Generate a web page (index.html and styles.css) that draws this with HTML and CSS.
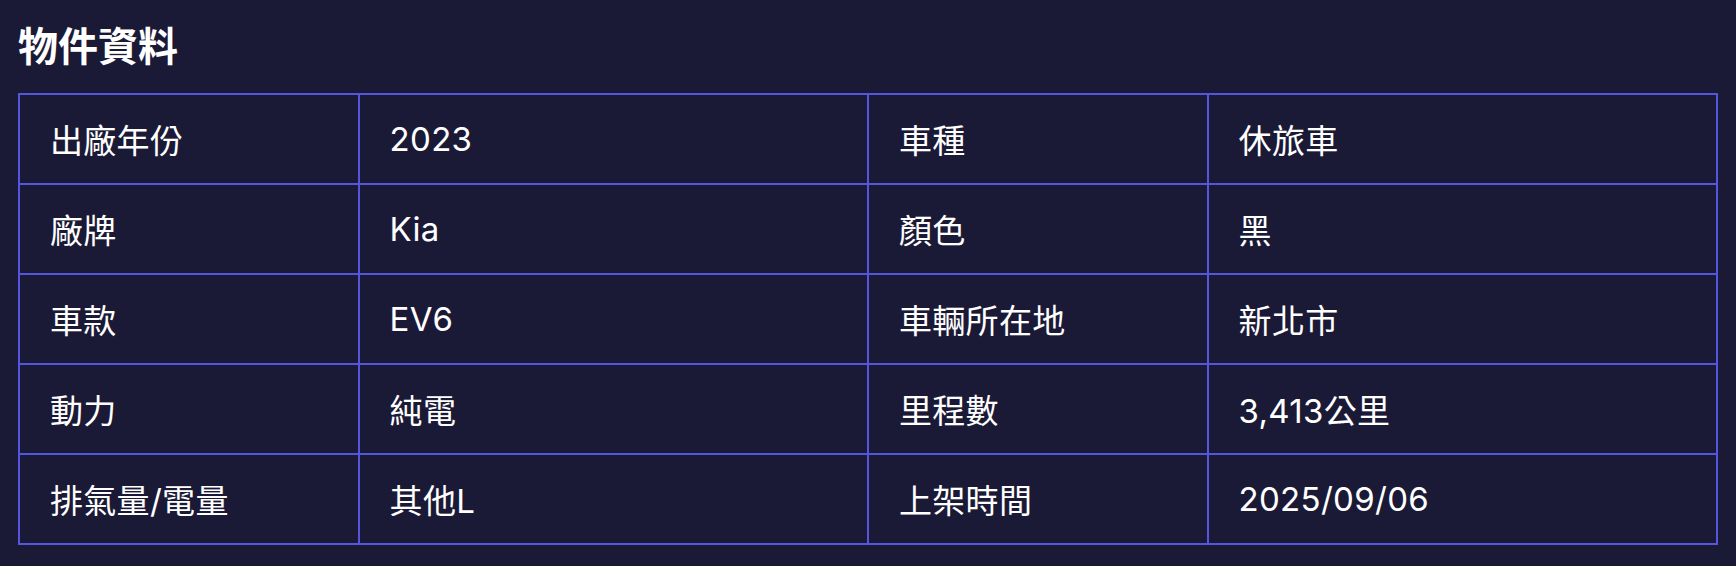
FILE: index.html
```html
<!DOCTYPE html>
<html lang="zh-Hant">
<head>
<meta charset="utf-8">
<title>物件資料</title>
<link rel="stylesheet" href="styles.css">
</head>
<body>
<section class="specs">
  <h2 class="specs-title">物件資料</h2>
  <table class="specs-table">
    <colgroup>
      <col class="col-label">
      <col class="col-value">
      <col class="col-label">
      <col class="col-value">
    </colgroup>
    <tbody>
      <tr><td>出廠年份</td><td>2023</td><td>車種</td><td>休旅車</td></tr>
      <tr><td>廠牌</td><td>Kia</td><td>顏色</td><td>黑</td></tr>
      <tr><td>車款</td><td>EV6</td><td>車輛所在地</td><td>新北市</td></tr>
      <tr><td>動力</td><td>純電</td><td>里程數</td><td>3,413公里</td></tr>
      <tr><td>排氣量/電量</td><td>其他L</td><td>上架時間</td><td>2025/09/06</td></tr>
    </tbody>
  </table>
</section>
</body>
</html>
```

FILE: styles.css
```css
html, body {
  margin: 0;
  background: #1b1a36;
}
body {
  padding: 18px;
  color: #ffffff;
  font-family: Inter, "Noto Sans CJK TC", "Noto Sans", sans-serif;
}
.specs-title {
  margin: 0 0 17px;
  font-size: 40px;
  line-height: 58px;
  font-weight: 700;
}
.specs-table {
  width: 100%;
  border-collapse: collapse;
  table-layout: fixed;
  font-size: 33px;
  letter-spacing: 0.3px;
}
.col-label { width: 20%; }
.col-value { width: 30%; }
.specs-table td {
  border: 2px solid #5556de;
  height: 90px;
  padding: 0 30px;
  box-sizing: border-box;
  vertical-align: middle;
  white-space: nowrap;
}
```
